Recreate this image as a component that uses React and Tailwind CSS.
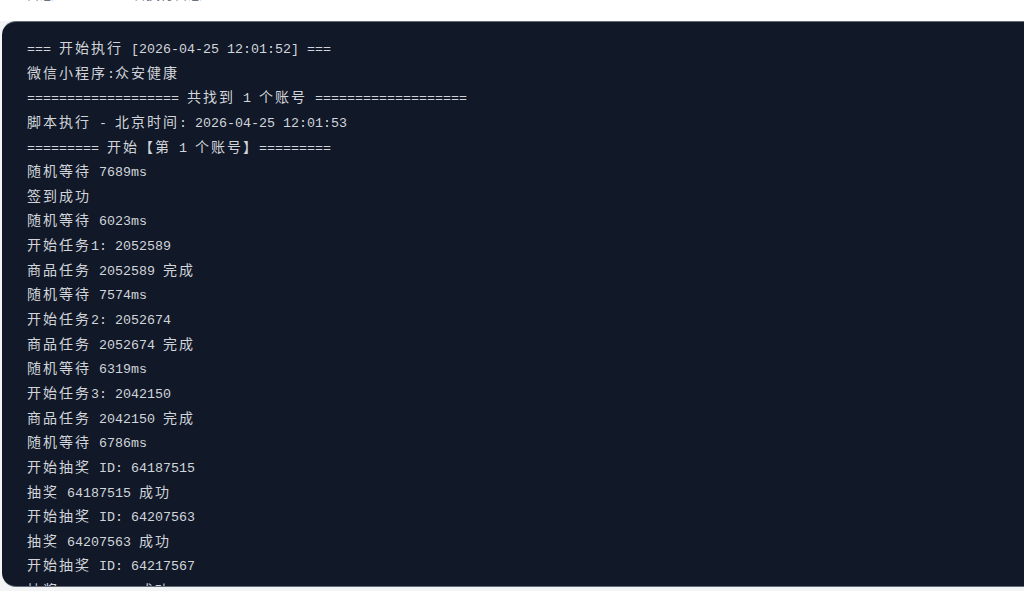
import React from "react";

const lines = [
  "=== 开始执行 [2026-04-25 12:01:52] ===",
  "微信小程序:众安健康",
  "=================== 共找到 1 个账号 ===================",
  "脚本执行 - 北京时间: 2026-04-25 12:01:53",
  "========= 开始【第 1 个账号】=========",
  "随机等待 7689ms",
  "签到成功",
  "随机等待 6023ms",
  "开始任务1: 2052589",
  "商品任务 2052589 完成",
  "随机等待 7574ms",
  "开始任务2: 2052674",
  "商品任务 2052674 完成",
  "随机等待 6319ms",
  "开始任务3: 2042150",
  "商品任务 2042150 完成",
  "随机等待 6786ms",
  "开始抽奖 ID: 64187515",
  "抽奖 64187515 成功",
  "开始抽奖 ID: 64207563",
  "抽奖 64207563 成功",
  "开始抽奖 ID: 64217567",
  "抽奖 64217567 成功",
  "随机等待 6120ms",
];

const cjk = /([\u3000-\u9fff\uff00-\uffef]+)/;

function Line({ text }) {
  const parts = text.split(cjk);
  return (
    <div className="h-[24.65px] leading-[24.65px] whitespace-pre">
      {parts.map((p, i) =>
        i % 2 === 1 ? (
          <span
            key={i}
            className="text-[14px] tracking-[2px] [font-family:'Noto_Sans_CJK_SC',sans-serif]"
          >
            {p}
          </span>
        ) : (
          <span key={i}>{p}</span>
        )
      )}
    </div>
  );
}

export default function App() {
  return (
    <div className="w-[1024px] h-[591px] overflow-hidden bg-white flex flex-col">
      <div className="h-[21px] shrink-0 bg-white overflow-hidden">
        <div className="-mt-[17px] pl-[26px] text-[14px] leading-[20px] text-gray-500 [font-family:'Noto_Sans_CJK_SC',sans-serif] flex gap-[64px]">
          <span>日志</span>
          <span>查看执行日志</span>
        </div>
      </div>
      <div className="flex-1 bg-[#f3f4f6] flex flex-col">
        <div className="ml-[2px] w-[1040px] h-[566px] shrink-0 rounded-[14px] bg-[#111827] border-t border-b border-[#9ca3af]/60 overflow-hidden pl-[25px] pt-[13px] text-[13.33px] text-[#d1d5db] [font-family:'Liberation_Mono',monospace]">
          {lines.map((l, i) => (
            <Line key={i} text={l} />
          ))}
        </div>
      </div>
    </div>
  );
}
